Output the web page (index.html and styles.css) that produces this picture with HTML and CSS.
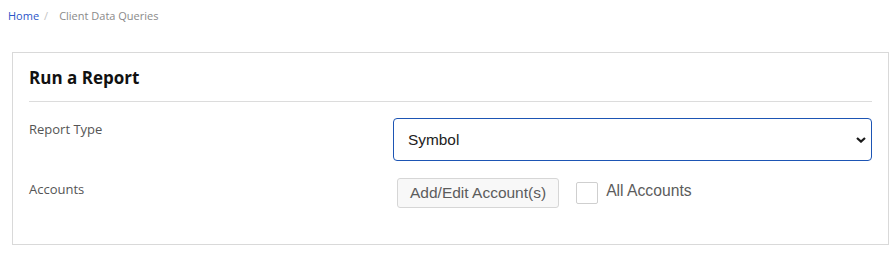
FILE: index.html
```html
<!DOCTYPE html>
<html lang="en">
<head>
<meta charset="utf-8">
<title>Client Data Queries</title>
<link rel="stylesheet" href="styles.css">
</head>
<body>
<nav class="breadcrumb">
  <a class="crumb-link" href="#">Home</a>
  <span class="crumb-sep">/</span>
  <span class="crumb-current">Client Data Queries</span>
</nav>
<section class="card">
  <h2 class="card-title">Run a Report</h2>
  <div class="form-row row-type">
    <label class="form-label" for="rtype">Report Type</label>
    <div class="form-field">
      <div class="select-wrap">
        <select id="rtype" class="select">
          <option>Symbol</option>
        </select>
        <svg class="select-arrow" width="10" height="6" viewBox="0 0 10 6"><path d="M1 1 L5 4.6 L9 1" fill="none" stroke="#1a1a1a" stroke-width="2.2"/></svg>
      </div>
    </div>
  </div>
  <div class="form-row row-accounts">
    <span class="form-label">Accounts</span>
    <div class="form-field inline-field">
      <button class="btn" type="button">Add/Edit Account(s)</button>
      <label class="check">
        <span class="check-box"></span>
        <span class="check-text">All Accounts</span>
      </label>
    </div>
  </div>
</section>
</body>
</html>
```
FILE: styles.css
```css
* { box-sizing: border-box; }
html, body { margin: 0; padding: 0; background: #fff; }
body { font-family: "Open Sans", "Noto Sans", sans-serif; color: #222; }

.breadcrumb {
  display: flex;
  align-items: baseline;
  padding: 8px 8px 0 8px;
  height: 52px;
  font-size: 11px;
  line-height: 16px;
}
.crumb-link { color: #2b55c8; text-decoration: none; }
.crumb-sep { color: #c4c4c4; margin: 0 11px 0 5px; }
.crumb-current { color: #8a8a8a; }

.card {
  margin-left: 12px;
  width: 877px;
  border: 1px solid #d9d9d9;
  padding: 15px 16px 36px 16px;
}
.card-title {
  margin: 0;
  font-size: 17px;
  line-height: 20px;
  font-weight: 700;
  color: #111;
  padding-bottom: 13px;
  border-bottom: 1px solid #dcdcdc;
}

.form-row {
  display: flex;
}
.row-type { margin-top: 16px; }
.row-accounts { margin-top: 17px; }
.form-label {
  width: 364px;
  flex: none;
  padding-top: 2px;
  font-size: 13px;
  line-height: 18px;
  color: #555;
}
.form-field { flex: 1; }

.select-wrap { position: relative; }
.select {
  display: block;
  width: 100%;
  height: 43px;
  appearance: none;
  -webkit-appearance: none;
  border: 1px solid #1d55b4;
  border-radius: 4px;
  background: #fff;
  padding: 0 14px;
  font-family: "Liberation Sans", Arial, sans-serif;
  font-size: 15.4px;
  color: #222;
  outline: none;
}
.select-arrow {
  position: absolute;
  right: 6px;
  top: 19px;
  pointer-events: none;
}

.inline-field {
  display: flex;
  align-items: center;
  padding-left: 4px;
}
.btn {
  height: 30px;
  padding: 0 12px;
  border: 1px solid #d6d6d6;
  border-radius: 3px;
  background: #f8f8f8;
  font-family: "Liberation Sans", Arial, sans-serif;
  font-size: 15.5px;
  color: #5c5c5c;
}
.check {
  display: flex;
  align-items: center;
  margin-left: 17px;
}
.check-box {
  width: 22px;
  height: 22px;
  border: 1px solid #cfcfcf;
  border-radius: 2px;
  background: #fff;
}
.check-text {
  margin-left: 8px;
  margin-bottom: 4px;
  font-family: "Liberation Sans", Arial, sans-serif;
  font-size: 15.7px;
  color: #5c5c5c;
}
```
